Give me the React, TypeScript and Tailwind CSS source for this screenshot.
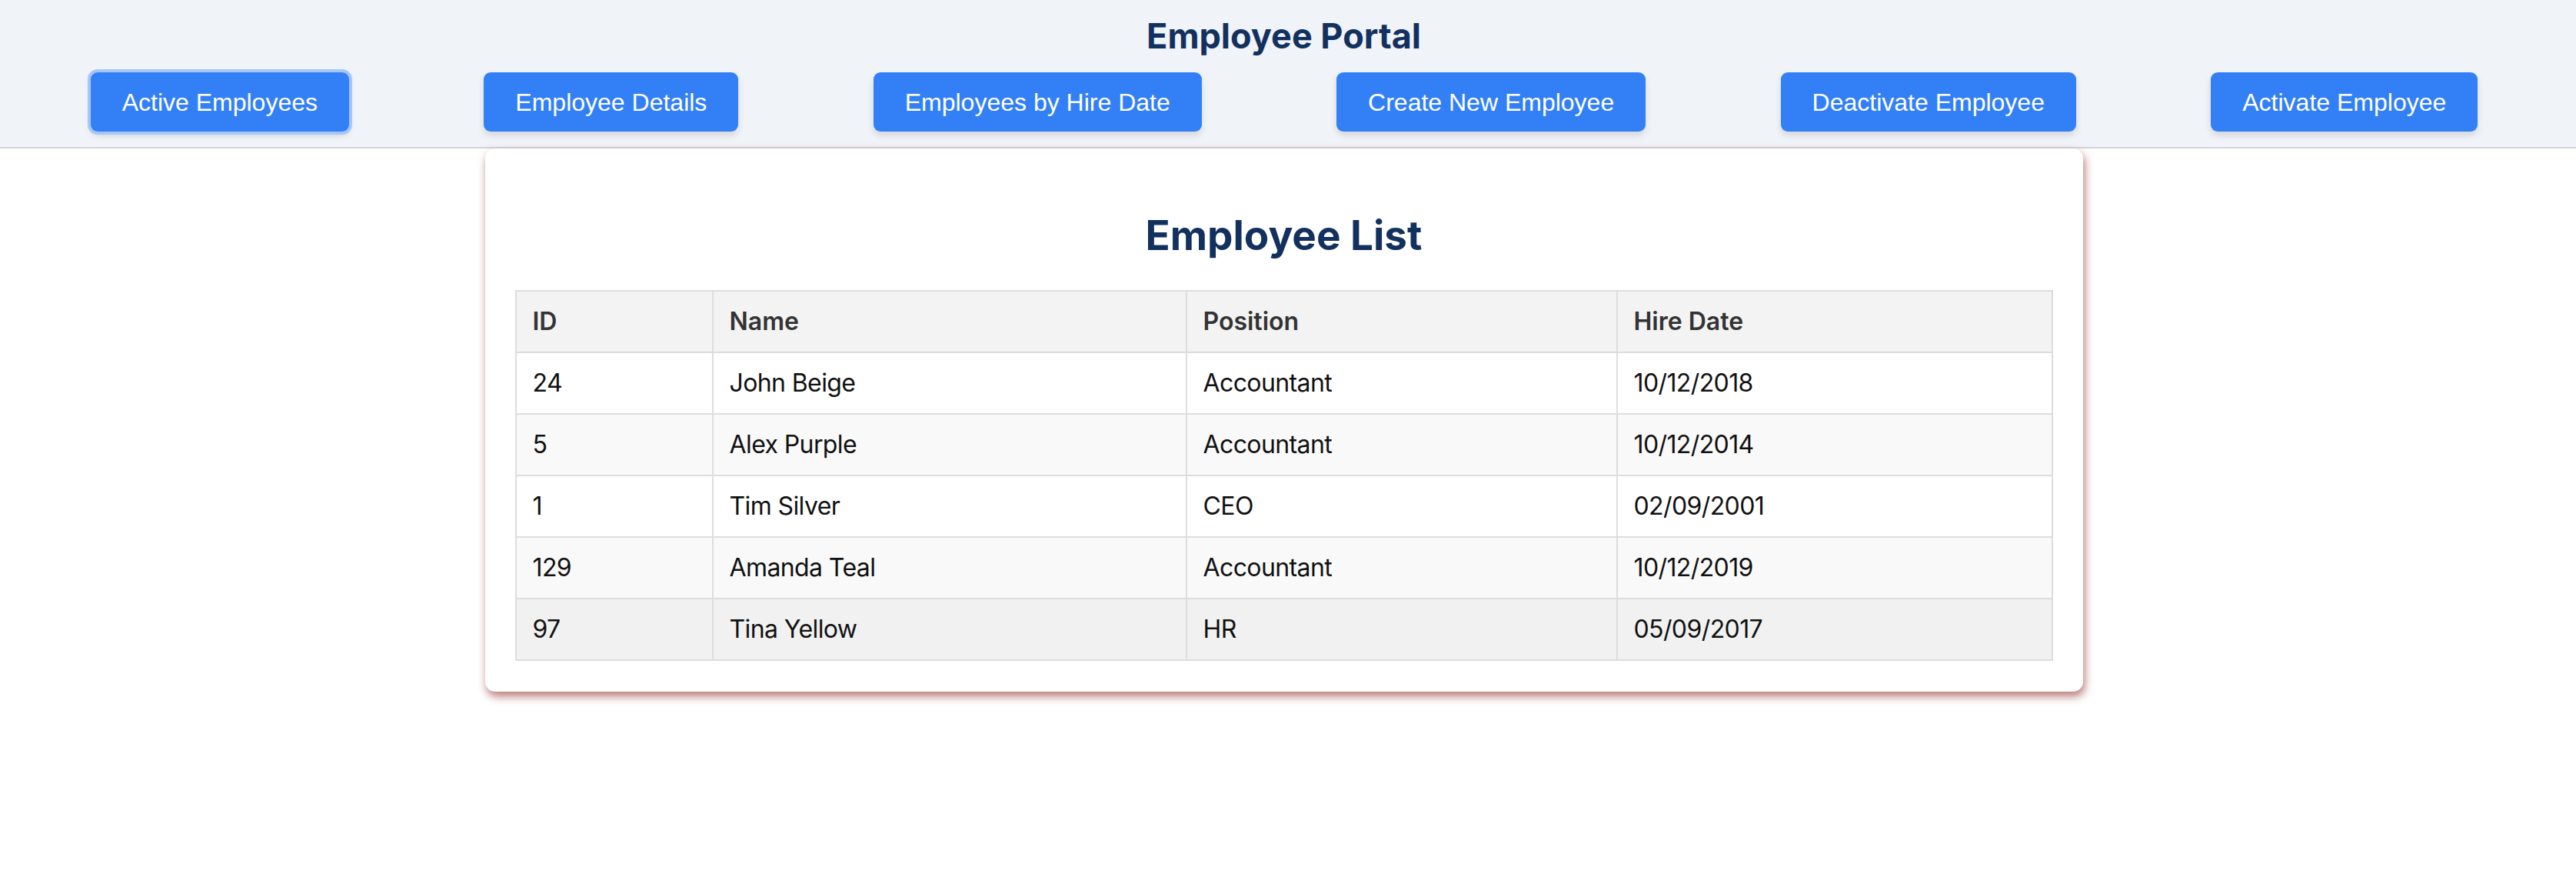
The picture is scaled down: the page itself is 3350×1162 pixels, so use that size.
import React from 'react';

type Employee = {
    id: number;
    name: string;
    position: string;
    hireDate: string;
};

const employees: Employee[] = [
    { id: 24, name: 'John Beige', position: 'Accountant', hireDate: '10/12/2018' },
    { id: 5, name: 'Alex Purple', position: 'Accountant', hireDate: '10/12/2014' },
    { id: 1, name: 'Tim Silver', position: 'CEO', hireDate: '02/09/2001' },
    { id: 129, name: 'Amanda Teal', position: 'Accountant', hireDate: '10/12/2019' },
    { id: 97, name: 'Tina Yellow', position: 'HR', hireDate: '05/09/2017' },
];

const navItems = [
    'Active Employees',
    'Employee Details',
    'Employees by Hire Date',
    'Create New Employee',
    'Deactivate Employee',
    'Activate Employee',
];

const NavButton = ({ label, active }: { label: string; active?: boolean }) => (
    <button
        className={
            active
                ? "h-[77px] px-[41px] rounded-[9px] bg-[#3380f6] text-white text-[32px] leading-[38px] font-['Liberation_Sans',Arial,sans-serif] shadow-[0_0_0_4px_#a6c6f9,0_5px_10px_rgba(0,0,0,0.12)]"
                : "h-[77px] px-[41px] rounded-[9px] bg-[#3380f6] text-white text-[32px] leading-[38px] font-['Liberation_Sans',Arial,sans-serif] shadow-[0_5px_10px_rgba(0,0,0,0.12)]"
        }
    >
        {label}
    </button>
);

export default function App() {
    return (
        <div className="min-h-[1162px] bg-white font-['Inter','Noto_Sans',sans-serif]">
            {/* Header */}
            <header className="bg-[#f0f3f8] border-b-2 border-[#d6d3de] pt-[20px] pb-[20px] pr-[10px]">
                <h1 className="text-center text-[45px] leading-[54px] font-bold text-[#13315f] pr-[1px]">
                    Employee Portal
                </h1>
                <nav className="mt-[20px] flex justify-around px-[30px]">
                    {navItems.map((item, i) => (
                        <NavButton key={item} label={item} active={i === 0} />
                    ))}
                </nav>
            </header>

            {/* Employee list card */}
            <main className="pr-[11px]">
                <div className="mx-auto w-[2078px] bg-white rounded-[13px] shadow-[2px_6px_12px_rgba(140,30,30,0.6)] px-[39px] pt-[81px] pb-[40px]">
                    <h2 className="text-center text-[53px] leading-[64px] font-bold text-[#13315f] mb-[39px]">
                        Employee List
                    </h2>
                    <table className="w-full border-collapse text-[32px] leading-[36px]">
                        <thead>
                            <tr className="bg-[#f3f3f3]">
                                <th className="w-[256px] border-2 border-[#dddddd] px-[21px] py-[21px] text-left font-semibold text-[#333333]">ID</th>
                                <th className="w-[616px] border-2 border-[#dddddd] px-[21px] py-[21px] text-left font-semibold text-[#333333]">Name</th>
                                <th className="w-[560px] border-2 border-[#dddddd] px-[21px] py-[21px] text-left font-semibold text-[#333333]">Position</th>
                                <th className="border-2 border-[#dddddd] px-[21px] py-[21px] text-left font-semibold text-[#333333]">Hire Date</th>
                            </tr>
                        </thead>
                        <tbody className="tracking-[-0.6px]">
                            {employees.map((emp, i) => (
                                <tr
                                    key={emp.id}
                                    className={i === 4 ? 'bg-[#f1f1f1]' : i % 2 === 1 ? 'bg-[#f9f9f9]' : 'bg-white'}
                                >
                                    <td className="border-2 border-[#dddddd] px-[21px] py-[21px] text-[#111111]">{emp.id}</td>
                                    <td className="border-2 border-[#dddddd] px-[21px] py-[21px] text-[#111111]">{emp.name}</td>
                                    <td className="border-2 border-[#dddddd] px-[21px] py-[21px] text-[#111111]">{emp.position}</td>
                                    <td className="border-2 border-[#dddddd] px-[21px] py-[21px] text-[#111111]">{emp.hireDate}</td>
                                </tr>
                            ))}
                        </tbody>
                    </table>
                </div>
            </main>
        </div>
    );
}
